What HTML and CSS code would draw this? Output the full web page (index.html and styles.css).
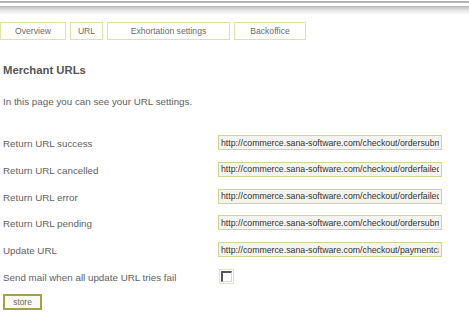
FILE: index.html
```html
<!DOCTYPE html>
<html lang="en">
<head>
  <meta charset="UTF-8">
  <title>Merchant URLs</title>
  <link rel="stylesheet" href="styles.css">
</head>
<body>

  <!-- Верхняя рамка окна -->
  <div class="chrome">
    <div class="chrome-line"></div>
    <div class="chrome-shade"></div>
  </div>

  <nav class="tabs">
    <button class="tab tab-overview">Overview</button>
    <button class="tab tab-url">URL</button>
    <button class="tab tab-exhort">Exhortation settings</button>
    <button class="tab tab-back">Backoffice</button>
  </nav>

  <main class="content">
    <h2>Merchant URLs</h2>
    <p class="intro">In this page you can see your URL settings.</p>

    <form class="url-form">
      <label for="urlSuccess">Return URL success</label>
      <input type="text" id="urlSuccess" value="http://commerce.sana-software.com/checkout/ordersubmitted">

      <label for="urlCancelled">Return URL cancelled</label>
      <input type="text" id="urlCancelled" value="http://commerce.sana-software.com/checkout/orderfailed">

      <label for="urlError">Return URL error</label>
      <input type="text" id="urlError" value="http://commerce.sana-software.com/checkout/orderfailed">

      <label for="urlPending">Return URL pending</label>
      <input type="text" id="urlPending" value="http://commerce.sana-software.com/checkout/ordersubmitted">

      <label for="urlUpdate">Update URL</label>
      <input type="text" id="urlUpdate" value="http://commerce.sana-software.com/checkout/paymentcallback">

      <label for="sendMail">Send mail when all update URL tries fail</label>
      <div class="check-wrap"><input type="checkbox" id="sendMail" class="check"></div>
    </form>

    <button class="store">store</button>
  </main>

</body>
</html>
```

FILE: styles.css
```css
:root {
  --text-color: #616161;
  --tab-border: #dde3a6;
  --input-border: #cfd68c;
  --input-bg: #f3f3ef;
  --font-family: 'Liberation Sans', Arial, sans-serif;
}
* {
  box-sizing: border-box;
}
body {
  margin: 0;
  background: #fff;
  color: var(--text-color);
  font-family: var(--font-family);
  font-size: 9.8px;
}
/* Рамка сверху */
.chrome {
  padding-top: 1px;
}
.chrome-line {
  height: 2px;
  background: #b3b3b3;
}
.chrome-shade {
  margin-top: 3px;
  height: 9px;
  background: linear-gradient(#b8b8b8, #e6e6e6 50%, #fff);
}
/* Вкладки */
.tabs {
  display: flex;
  gap: 4px;
  margin-top: 7px;
}
.tab {
  height: 18px;
  padding: 0;
  border: 1px solid var(--tab-border);
  background: #fff;
  color: #6a6a6a;
  font-family: var(--font-family);
  font-size: 8.6px;
}
.tab-overview { width: 66px; }
.tab-url { width: 33px; }
.tab-exhort { width: 123px; }
.tab-back { width: 72px; }
/* Содержимое */
.content {
  padding-left: 3px;
}
.content h2 {
  margin: 23px 0 0;
  font-size: 11.3px;
  font-weight: bold;
  color: #555;
  line-height: 14px;
}
.intro {
  margin: 19px 0 0;
  font-size: 9.8px;
  line-height: 12px;
}
.url-form {
  display: grid;
  grid-template-columns: 215px 224px;
  grid-auto-rows: 15px;
  row-gap: 11.8px;
  align-items: center;
  margin-top: 27px;
}
.url-form label {
  font-size: 9.8px;
  line-height: 15px;
  position: relative;
  top: 1px;
}
.url-form input[type="text"] {
  width: 224px;
  height: 15px;
  margin: 0;
  padding: 0 2px;
  border: 1px solid var(--input-border);
  background: var(--input-bg);
  color: #333;
  font-family: var(--font-family);
  font-size: 8.75px;
  outline: none;
}
.check-wrap {
  width: 15px;
  height: 15px;
  margin-left: 1px;
  border: 1px solid #dfe3b8;
  padding: 1px;
}
.check {
  appearance: none;
  display: block;
  margin: 0;
  width: 11px;
  height: 11px;
  border-top: 2px solid #555;
  border-left: 2px solid #555;
  border-right: 1px solid #d8d8d8;
  border-bottom: 1px solid #d8d8d8;
  background: #fff;
}
.store {
  display: block;
  margin-top: 10px;
  width: 39px;
  height: 16px;
  padding: 0;
  border: 2px solid #9fa24a;
  background: #fafaf2;
  color: #6a6a6a;
  font-family: var(--font-family);
  font-size: 8.4px;
}
```
